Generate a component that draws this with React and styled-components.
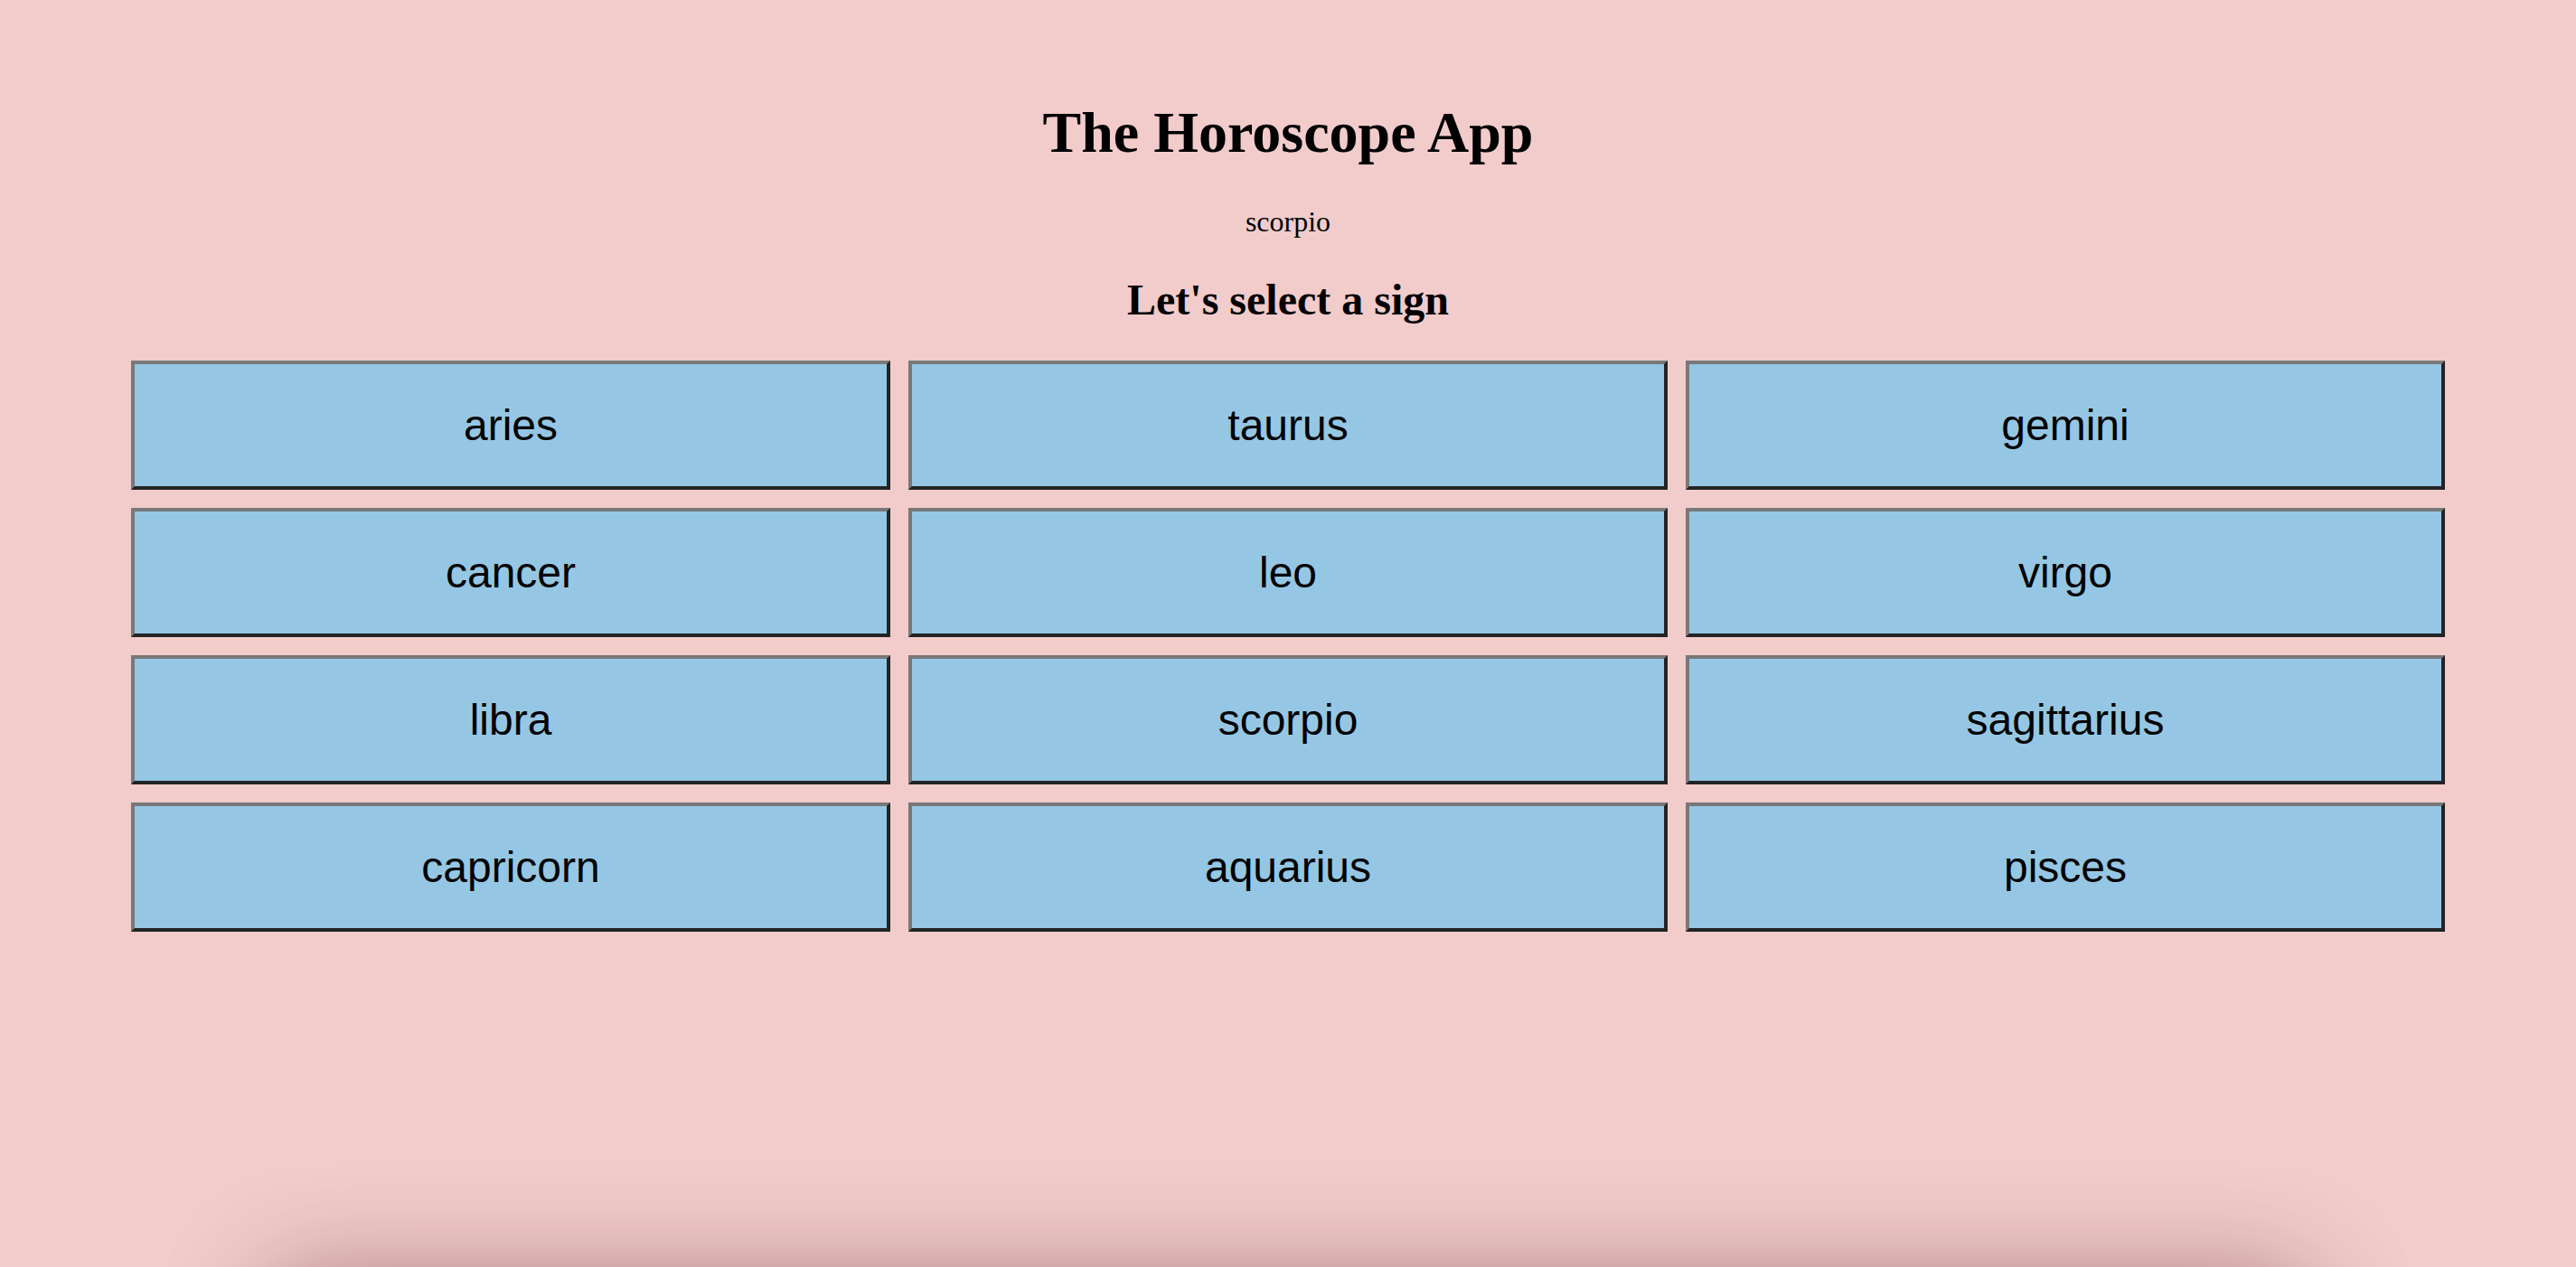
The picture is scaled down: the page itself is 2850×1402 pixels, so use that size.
import React, { useState } from "react";
import styled, { createGlobalStyle } from "styled-components";

const GlobalStyle = createGlobalStyle`
  html, body {
    margin: 0;
    padding: 0;
    background: #f1cccb;
  }
  body {
    font-family: "Liberation Serif", "Times New Roman", serif;
    color: #000;
  }
`;

const Page = styled.div`
  min-height: 100vh;
  height: 100vh;
  overflow: hidden;
  box-sizing: border-box;
  padding-top: 67px;
  display: flex;
  flex-direction: column;
  align-items: center;
  background: #f1cccb;
`;

const Title = styled.h1`
  margin: 43px 0 0;
  font-family: "Liberation Serif", "Times New Roman", serif;
  font-weight: 700;
  font-size: 64px;
  line-height: normal;
  text-align: center;
`;

const Current = styled.p`
  margin: 43px 0 0;
  font-family: "Liberation Serif", "Times New Roman", serif;
  font-size: 32px;
  line-height: normal;
  text-align: center;
`;

const Subtitle = styled.h2`
  margin: 40px 0 0;
  font-family: "Liberation Serif", "Times New Roman", serif;
  font-weight: 700;
  font-size: 48px;
  line-height: normal;
  text-align: center;
`;

const Grid = styled.div`
  margin-top: 40px;
  display: grid;
  grid-template-columns: repeat(3, 840px);
  grid-auto-rows: 143px;
  gap: 20px;
  justify-content: center;
`;

const SignButton = styled.button`
  box-sizing: border-box;
  height: 143px;
  margin: 0;
  padding: 0;
  border: 4px solid;
  border-color: #787878 #232323 #232323 #787878;
  background: #95c7e4;
  font-family: "Liberation Sans", Arial, sans-serif;
  font-size: 48px;
  color: #000;
  cursor: pointer;
  display: flex;
  align-items: center;
  justify-content: center;
`;

const ReadingCard = styled.div`
  margin-top: 378px;
  width: 2260px;
  height: 400px;
  flex-shrink: 0;
  border-radius: 30px;
  background: #f1cccb;
  box-shadow: 0 0 110px rgba(90, 30, 30, 0.42);
`;

const SIGNS = [
  "aries",
  "taurus",
  "gemini",
  "cancer",
  "leo",
  "virgo",
  "libra",
  "scorpio",
  "sagittarius",
  "capricorn",
  "aquarius",
  "pisces",
];

export default function App() {
  const [sign, setSign] = useState("scorpio");
  return (
    <>
      <GlobalStyle />
      <Page>
        <Title>The Horoscope App</Title>
        <Current>{sign}</Current>
        <Subtitle>Let's select a sign</Subtitle>
        <Grid>
          {SIGNS.map((s) => (
            <SignButton key={s} onClick={() => setSign(s)}>
              {s}
            </SignButton>
          ))}
        </Grid>
        <ReadingCard />
      </Page>
    </>
  );
}
